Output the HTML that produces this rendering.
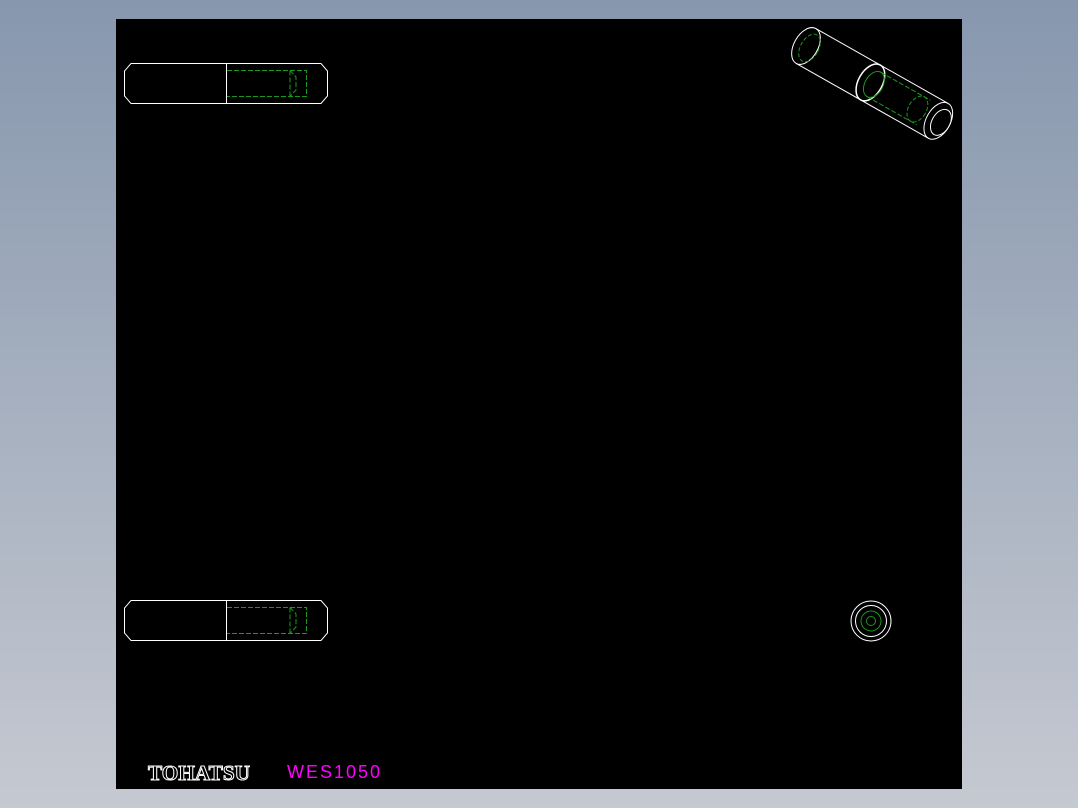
<html><body style="margin:0;width:1078px;height:808px;background:linear-gradient(#8797ae,#c5c9d1);overflow:hidden">
<svg width="1078" height="808" style="position:absolute;left:0;top:0">
<rect x="116" y="19" width="846" height="770" fill="#000"/>
<g id="pin" fill="none" stroke-width="1">
<path d="M131,63.5 H321 L327.5,71 V96 L321,103.5 H131 L124.5,96 V71 Z M226.5,63 V104" stroke="#fff"/>
<path d="M227,70.5 H306.5 V96.5 H227 M290,70.5 L296,77 V90 L290,96.5 M290,70.5 V96.5" stroke="#1a9a1a" stroke-dasharray="5,2"/>
</g>
<use href="#pin" y="537"/>
<g fill="none" transform="translate(806,46) rotate(29.5)">
<path d="M0,-20 H152 M0,20 H152" stroke="#fff"/>
<ellipse cx="0" cy="0" rx="12" ry="20" stroke="#fff"/>
<ellipse cx="4" cy="0" rx="9" ry="15" stroke="#1a9a1a" stroke-dasharray="4,2"/>
<ellipse cx="74" cy="0" rx="12" ry="20" stroke="#fff" stroke-width="1.5"/>
<ellipse cx="78" cy="0" rx="9" ry="14" stroke="#1a9a1a"/>
<path d="M78,-14 H135 M78,14 H135" stroke="#1a9a1a" stroke-dasharray="5,2"/>
<ellipse cx="128" cy="0" rx="9" ry="14" stroke="#1a9a1a" stroke-dasharray="4,2"/>
<ellipse cx="152" cy="0" rx="12" ry="20" stroke="#fff"/>
<ellipse cx="155" cy="0" rx="9" ry="14" stroke="#fff"/>
</g>
<g fill="none">
<circle cx="871" cy="621" r="20" stroke="#fff"/>
<circle cx="871" cy="621" r="15.5" stroke="#fff"/>
<circle cx="871" cy="621" r="10" stroke="#1a9a1a"/>
<circle cx="871" cy="621" r="4.5" stroke="#1a9a1a"/>
</g>
<text x="148" y="780" font-family="Liberation Serif" font-size="21" font-weight="bold" fill="#000" stroke="#fff" stroke-width="1" textLength="102" lengthAdjust="spacingAndGlyphs">TOHATSU</text>
<text x="287" y="778" font-family="Liberation Sans" font-size="18" fill="#f0f" letter-spacing="2">WES1050</text>
</svg>
</body></html>
